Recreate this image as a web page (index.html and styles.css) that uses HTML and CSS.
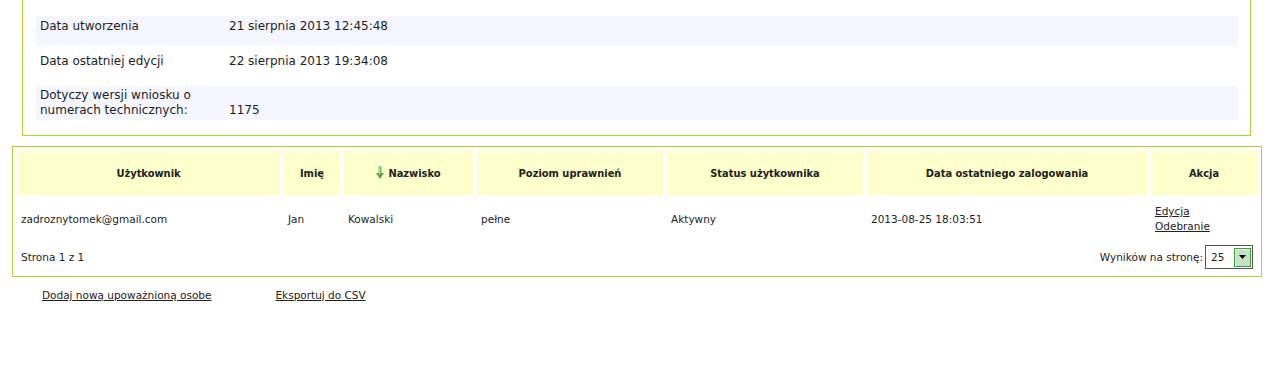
FILE: index.html
```html
<!DOCTYPE html>
<html lang="pl">
<head>
    <meta charset="UTF-8">
    <title>Uprawnienia użytkowników</title>
    <link rel="stylesheet" href="styles.css">
</head>
<body>
    <div class="details-box">
        <div class="detail-row detail-row-shaded row-created">
            <div class="detail-label">Data utworzenia</div>
            <div class="detail-value">21 sierpnia 2013 12:45:48</div>
        </div>
        <div class="detail-row row-edited">
            <div class="detail-label">Data ostatniej edycji</div>
            <div class="detail-value">22 sierpnia 2013 19:34:08</div>
        </div>
        <div class="detail-row detail-row-shaded row-version">
            <div class="detail-label">Dotyczy wersji wniosku o<br>numerach technicznych:</div>
            <div class="detail-value value-bottom">1175</div>
        </div>
    </div>

    <div class="users-box">
        <table class="users-table">
            <thead>
                <tr>
                    <th class="col-user">Użytkownik</th>
                    <th class="col-name">Imię</th>
                    <th class="col-surname">
                        <svg class="sort-arrow" width="8" height="14" viewBox="0 0 8 14">
                            <rect x="2.5" y="0" width="3" height="8" fill="#7fb86a"/>
                            <path d="M0 7 L8 7 L4 13 Z" fill="#5fa34e"/>
                            <rect x="3" y="0" width="1" height="8" fill="#b6dba8"/>
                        </svg>Nazwisko
                    </th>
                    <th class="col-level">Poziom uprawnień</th>
                    <th class="col-status">Status użytkownika</th>
                    <th class="col-login">Data ostatniego zalogowania</th>
                    <th class="col-action">Akcja</th>
                </tr>
            </thead>
            <tbody>
                <tr>
                    <td>zadroznytomek@gmail.com</td>
                    <td>Jan</td>
                    <td>Kowalski</td>
                    <td>pełne</td>
                    <td>Aktywny</td>
                    <td>2013-08-25 18:03:51</td>
                    <td class="actions">
                        <a href="#">Edycja</a><br>
                        <a href="#">Odebranie</a>
                    </td>
                </tr>
            </tbody>
        </table>
        <div class="pager">
            <span class="pager-info">Strona 1 z 1</span>
            <div class="per-page">
                <span>Wyników na stronę:</span>
                <div class="fake-select">
                    <span class="fake-select-value">25</span>
                    <span class="fake-select-button">
                        <svg width="7" height="4" viewBox="0 0 7 4"><path d="M0 0 H7 L3.5 4 Z" fill="#000"/></svg>
                    </span>
                </div>
            </div>
        </div>
    </div>

    <div class="bottom-links">
        <a href="#" class="add-link">Dodaj nową upoważnioną osobe</a>
        <a href="#">Eksportuj do CSV</a>
    </div>
</body>
</html>
```

FILE: styles.css
```css
:root {
    --green: #aed432;
    --row-shade: #f5f6fe;
    --header-bg: #ffffcc;
    --text: #1e1e1e;
}

body {
    margin: 0;
    font-family: "DejaVu Sans", Tahoma, sans-serif;
    color: var(--text);
    background: #ffffff;
}

/* top details */

.details-box {
    margin-left: 22px;
    width: 1202px;
    padding: 16px 12px 15px 13px;
    border: 1px solid var(--green);
    border-top: none;
    font-size: 12px;
    line-height: 15px;
}

.detail-row {
    display: flex;
    padding-left: 4px;
}

.detail-row-shaded {
    background: var(--row-shade);
}

.row-created {
    height: 27px;
    padding-top: 3px;
}

.row-edited {
    height: 32px;
    padding-top: 8px;
}

.row-version {
    height: 32px;
    padding-top: 2px;
}

.detail-label {
    width: 189px;
}

.value-bottom {
    align-self: flex-start;
    margin-top: 15px;
}

/* users table */

.users-box {
    margin: 10px 0 0 12px;
    width: 1248px;
    border: 1px solid var(--green);
    font-size: 10.5px;
}

.users-table {
    width: 100%;
    border-spacing: 4px;
    table-layout: fixed;
}

.users-table th {
    background: var(--header-bg);
    height: 44px;
    padding: 0;
    font-family: "DejaVu Sans Condensed", "DejaVu Sans", sans-serif;
    font-size: 11px;
    font-weight: bold;
    color: #222;
}

.users-table td {
    padding: 0 4px;
    height: 40px;
    vertical-align: middle;
}

.col-user { width: 263px; }
.col-name { width: 56px; }
.col-surname { width: 129px; }
.col-level { width: 186px; }
.col-status { width: 196px; }
.col-login { width: 280px; }
.col-action { width: 106px; }

.sort-arrow {
    vertical-align: -3px;
    margin-right: 4px;
}

.actions {
    line-height: 15px;
}

a {
    color: #222;
    text-decoration: underline;
}

.pager {
    display: flex;
    justify-content: space-between;
    align-items: center;
    padding: 2px 8px 7px 8px;
}

.per-page {
    display: flex;
    align-items: center;
}

.fake-select {
    display: flex;
    align-items: center;
    justify-content: space-between;
    height: 22px;
    border: 1px solid #555;
    margin-left: 2px;
    padding: 0 1px 0 5px;
    width: 40px;
}

.fake-select-button {
    display: flex;
    align-items: center;
    justify-content: center;
    width: 15px;
    height: 17px;
    background: #c3e3c3;
    border: 1px solid #3ea33e;
    box-shadow: inset 1px 1px 0 #e6f6e6;
}

.bottom-links {
    display: flex;
    padding: 12px 0 0 42px;
    font-size: 10.5px;
}

.add-link {
    margin-right: 64px;
}
```
